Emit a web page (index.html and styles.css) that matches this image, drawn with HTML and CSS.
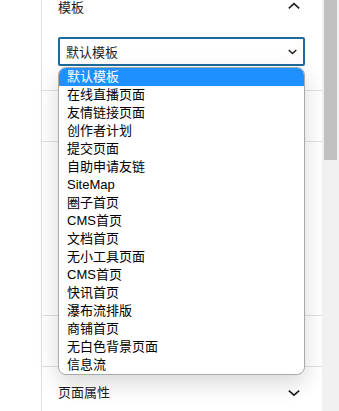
FILE: index.html
```html
<!DOCTYPE html>
<html lang="zh-CN">
<head>
    <meta charset="UTF-8">
    <meta name="viewport" content="width=device-width, initial-scale=1.0">
    <title>模板</title>
    <link rel="stylesheet" href="styles.css">
</head>
<body>
    <div class="gutter"></div>

    <div class="panel">
        <div class="section template-section">
            <div class="section-header top">
                <span>模板</span>
                <svg class="chevron" width="12" height="16" viewBox="0 0 12 16">
                    <polyline points="0.8,8.4 6,3.6 11.2,8.4" />
                </svg>
            </div>

            <div class="select-box">
                <span>默认模板</span>
                <svg class="select-arrow" width="9" height="6" viewBox="0 0 9 6">
                    <polyline points="0.7,1 4.5,4.6 8.3,1" />
                </svg>
            </div>

            <ul class="dropdown">
                <li class="active">默认模板</li>
                <li>在线直播页面</li>
                <li>友情链接页面</li>
                <li>创作者计划</li>
                <li>提交页面</li>
                <li>自助申请友链</li>
                <li>SiteMap</li>
                <li>圈子首页</li>
                <li>CMS首页</li>
                <li>文档首页</li>
                <li>无小工具页面</li>
                <li>CMS首页</li>
                <li>快讯首页</li>
                <li>瀑布流排版</li>
                <li>商铺首页</li>
                <li>无白色背景页面</li>
                <li>信息流</li>
            </ul>
        </div>

        <div class="section small"></div>
        <div class="section large"></div>
        <div class="section small"></div>

        <div class="section">
            <div class="section-header">
                <span>页面属性</span>
                <svg class="chevron" width="12" height="8" viewBox="0 0 12 8">
                    <polyline points="0.8,1.6 6,6.2 11.2,1.6" />
                </svg>
            </div>
        </div>
    </div>

    <div class="scrollbar">
        <div class="thumb"></div>
    </div>
</body>
</html>
```

FILE: styles.css
```css
* {
    margin: 0;
    padding: 0;
    box-sizing: border-box;
}

body {
    display: flex;
    height: 411px;
    overflow: hidden;
    background: #fff;
    color: #1e1e1e;
    font-family: "Liberation Sans", "Noto Sans CJK SC", sans-serif;
    font-size: 13px;
}

.gutter {
    width: 42px;
    flex-shrink: 0;
    border-right: 1px solid #e0e0e0;
}

.panel {
    width: 280px;
    flex-shrink: 0;
}

.section {
    border-bottom: 1px solid #e0e0e0;
}

.section.small {
    height: 51px;
}

.section.large {
    height: 174px;
}

.template-section {
    position: relative;
    padding: 0 17px 24px 16px;
}

.section-header {
    display: flex;
    justify-content: space-between;
    align-items: center;
    height: 52px;
    padding: 0 22px 0 16px;
    line-height: 16px;
}

.section-header.top {
    height: 16px;
    padding: 0 5px 0 0;
}

.chevron polyline,
.select-arrow polyline {
    fill: none;
    stroke: #1e1e1e;
    stroke-width: 1.6;
}

.select-arrow polyline {
    stroke-width: 1.4;
}

.select-box {
    display: flex;
    justify-content: space-between;
    align-items: center;
    height: 29px;
    margin-top: 21px;
    padding: 0 6px 0 6px;
    border: 2px solid #1d6a9c;
    border-radius: 2px;
    color: #1e1e1e;
}

.dropdown {
    position: absolute;
    top: 67px;
    left: 16px;
    width: 247px;
    list-style: none;
    background: #fff;
    border: 1px solid #a9a9a9;
    border-radius: 8px;
    overflow: hidden;
    box-shadow: 0 8px 22px rgba(0, 0, 0, 0.16);
    z-index: 10;
}

.dropdown li {
    height: 18px;
    line-height: 18px;
    padding-left: 8px;
    color: #000;
}

.dropdown li.active {
    background: #1e90ff;
    color: #fff;
}

.scrollbar {
    width: 17px;
    flex-shrink: 0;
    background: #f1f1f1;
    padding: 0 2px;
}

.thumb {
    height: 160px;
    background: #c1c1c1;
}
```
